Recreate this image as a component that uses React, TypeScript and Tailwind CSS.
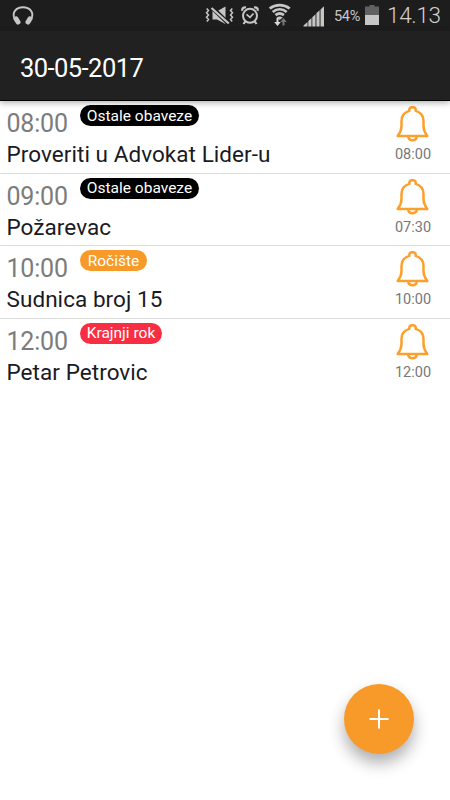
import clsx from 'clsx';

const events = [
  { time: '08:00', title: 'Proveriti u Advokat Lider-u', tag: 'Ostale obaveze', color: 'bg-black', width: 'w-[119px]', alarm: '08:00' },
  { time: '09:00', title: 'Požarevac', tag: 'Ostale obaveze', color: 'bg-black', width: 'w-[119px]', alarm: '07:30' },
  { time: '10:00', title: 'Sudnica broj 15', tag: 'Ročište', color: 'bg-[#f89a2a]', width: 'w-[67px]', alarm: '10:00' },
  { time: '12:00', title: 'Petar Petrovic', tag: 'Krajnji rok', color: 'bg-[#fa2e43]', width: 'w-[82px]', alarm: '12:00' },
];

const BellIcon = () => (
  <svg className="block" width="34" height="36" viewBox="0.5 0.5 34 36" fill="none" stroke="#fca02d" strokeWidth="2.5" strokeLinejoin="round">
    <path d="M13.800 5.400V4.300C13.800 .8 20.200.8 20.200 4.300V5.400C25.500 7 28 10.500 28 15.500V20.500C28 24.500 29.500 27.500 31.800 30.500H2.200C4.500 27.500 6 24.500 6 20.500V15.500C6 10.500 8.500 7 13.800 5.400Z" />
    <path d="M12.700 30.800C13.200 36 20.800 36 21.300 30.800" />
  </svg>
);

const StatusBar = () => (
  <div className="relative h-[31px] bg-[#1d1d1d] text-[#c6c6c6]">
    <svg className="block" width="386" height="31" viewBox="0 0 386 31" fill="none" stroke="#c6c6c6">
      {/* headphones */}
      <path d="M14.500 18.500C11.800 12.500 16 7.300 23 7.300S34.200 12.500 31.500 18.500" strokeWidth="1.900" />
      <path d="M16 18.800L18 22M30 18.800L28 22" strokeWidth="5" strokeLinecap="round" />
      {/* vibrate / muted */}
      <path d="M206.700 8.500L208.500 10.500L206.500 12.800L208.500 15L206.500 17.300L208.500 19.500L206.800 21.500M232.300 8.500L230.500 10.500L232.500 12.800L230.500 15L232.500 17.300L230.500 19.500L232.200 21.500" strokeWidth="1.500" />
      <path d="M212.500 11H217.500L225.500 6.500V24L217 19.500H212.500Z" fill="#c6c6c6" stroke="none" />
      <path d="M211.500 7L229.500 24.500" stroke="#1d1d1d" strokeWidth="4.500" />
      <path d="M211.500 8L228.800 23.500" strokeWidth="2.200" />
      {/* alarm clock */}
      <circle cx="250" cy="15.800" r="7" strokeWidth="2" />
      <path d="M242.500 10.800C241.700 8.500 243.300 7 246 7.500M257.500 10.800C258.300 8.500 256.700 7 254 7.500M245.200 21.500L243.500 24M254.800 21.500L256.500 24" strokeWidth="2.200" />
      <path d="M246.500 14.300L250 17.300L253.500 13.500" strokeWidth="1.700" />
      {/* wifi */}
      <path d="M269.700 8.500C275.700 3.900 283.700 3.900 289.700 8.500M272.700 12C277 8.500 282.400 8.500 286.700 12M275.500 15.200C278 13.200 281.400 13.200 283.900 15.200" strokeWidth="2.800" />
      <path d="M276.700 17.500Q279.700 15.400 282.700 17.500L279.700 20Z" fill="#c6c6c6" stroke="none" />
      <path d="M276.500 18H278.500V22H280.800L277.500 26L274.200 22H276.500Z" fill="#d8d8d8" stroke="none" />
      <path d="M282.500 25.500V22H280.300L283.500 18L286.700 22H284.500V25.500Z" fill="#777" stroke="none" />
      {/* signal */}
      <path d="M303.500 26.500V25.500L307.500 22V26.500ZM308.300 26.500V21L311.500 18V26.500ZM312.300 26.500V17.300L315.500 14.300V26.500ZM316.400 26.500V13.300L319.600 10.300V26.500ZM320.500 26.500V9.500L324 6.300V26.500Z" fill="#c6c6c6" stroke="none" />
      {/* battery */}
      <path d="M365 6.500H369.500V5H374.500V6.500H379V15H365Z" fill="#616161" stroke="none" />
      <path d="M365 15H379V25H365Z" fill="#c6c6c6" stroke="none" />
    </svg>
    <span className="absolute left-[334px] top-[7px] text-[14.5px] leading-5 tracking-[-0.3px]">54%</span>
    <span className="absolute left-[387px] top-0 text-[22.5px] font-light leading-[31px] tracking-[-0.3px] text-[#d2d2d2]">14.13</span>
  </div>
);

const App = () => {
  return (
    <div className="relative h-[800px] w-[450px] overflow-hidden bg-white font-['Roboto',sans-serif] whitespace-nowrap">
      <StatusBar />
      <header className="relative z-10 flex h-[70px] items-center border-b border-black bg-[#212121] pl-5 shadow-[0_2px_6px_rgba(0,0,0,0.3)]">
        <h1 className="pt-[4px] text-[25.5px] leading-8 tracking-[-0.55px] text-white">30-05-2017</h1>
      </header>

      <ul>
        {events.map((event, index) => (
          <li
            key={event.time}
            className={clsx('flex h-[72.5px] justify-between', index < events.length - 1 && 'border-b border-[#dedede]')}
          >
            <div className="pl-[6.5px] pt-[6px]">
              <div className="flex h-[31px] items-start">
                <span className="w-[73.5px] pt-px text-[25px] leading-8 tracking-[-0.2px] text-[#7c7c7c]">{event.time}</span>
                <span className={clsx('-mt-[2px] flex h-[21px] items-center justify-center rounded-full pt-[2px] text-[15.5px] text-white', event.color, event.width)}>
                  {event.tag}
                </span>
              </div>
              <p className="text-[22.5px] leading-8 tracking-[0.06px] text-[#1a1a24]">{event.title}</p>
            </div>
            <div className="flex w-[74px] flex-col items-center pt-[5px]">
              <BellIcon />
              <span className="text-[14.5px] leading-[26px] text-[#777]">{event.alarm}</span>
            </div>
          </li>
        ))}
      </ul>

      <button className="absolute left-[344px] top-[684px] flex size-[70px] items-center justify-center rounded-full bg-[#f89a2a] shadow-[0_9px_16px_rgba(0,0,0,0.32)]">
        <svg width="20" height="20" viewBox="0 0 20 20" stroke="white" strokeWidth="2">
          <path d="M10 .5V19.500M.5 10H19.500" />
        </svg>
      </button>
    </div>
  );
};

export default App;
